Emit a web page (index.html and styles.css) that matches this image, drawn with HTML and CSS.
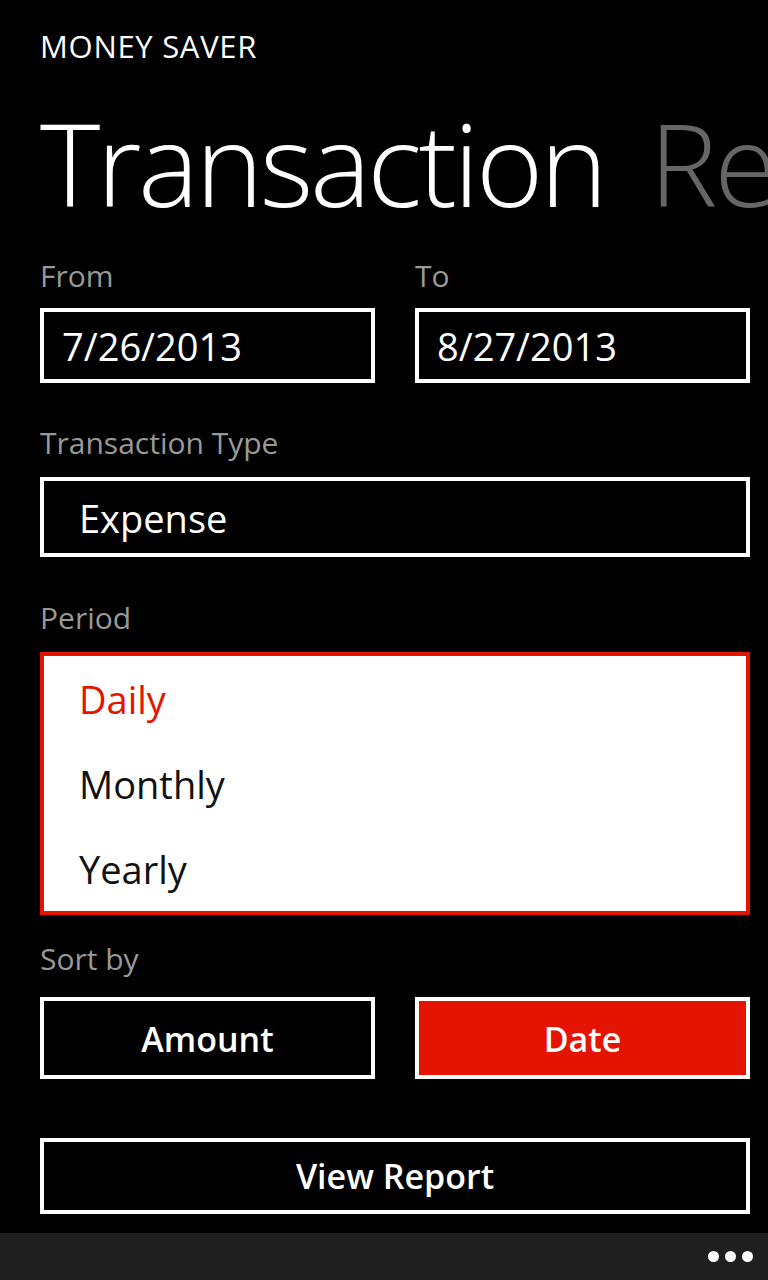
FILE: index.html
```html
<!DOCTYPE html>
<html lang="en">
<head>
<meta charset="utf-8">
<title>Money Saver</title>
<link rel="stylesheet" href="styles.css">
</head>
<body>
<div class="page">
  <main class="main">
    <div class="app-title">MONEY SAVER</div>
    <h1 class="pivot"><span class="pivot-active">Transaction</span><span class="pivot-next">Report</span></h1>

    <div class="row two-col">
      <div class="field">
        <div class="label label-from">From</div>
        <div class="box date-box">7/26/2013</div>
      </div>
      <div class="field">
        <div class="label label-from">To</div>
        <div class="box date-box">8/27/2013</div>
      </div>
    </div>

    <div class="label label-type">Transaction Type</div>
    <div class="box type-box">Expense</div>

    <div class="label label-period">Period</div>
    <ul class="period-list">
      <li class="period-item selected">Daily</li>
      <li class="period-item">Monthly</li>
      <li class="period-item">Yearly</li>
    </ul>

    <div class="label label-sort">Sort by</div>
    <div class="two-col">
      <div class="btn">Amount</div>
      <div class="btn btn-active">Date</div>
    </div>

    <div class="btn btn-report">View Report</div>
  </main>
  <footer class="appbar">
    <span class="dot"></span><span class="dot"></span><span class="dot"></span>
  </footer>
</div>
</body>
</html>
```

FILE: styles.css
```css
html, body {
  margin: 0;
  padding: 0;
  background: #000;
}
body {
  font-family: "Open Sans", "Noto Sans", sans-serif;
  color: #fff;
  overflow: hidden;
}
.page {
  width: 768px;
  height: 1280px;
  display: flex;
  flex-direction: column;
  overflow: hidden;
}
.main {
  flex: 1;
  padding-left: 40px;
  width: 710px;
}
.app-title {
  font-size: 31px;
  line-height: 31px;
  letter-spacing: 0.7px;
  margin-top: 31px;
  white-space: nowrap;
}
.pivot {
  margin: 43px 0 0 0;
  font-size: 115px;
  line-height: 115px;
  font-weight: 300;
  white-space: nowrap;
  width: 728px;
  overflow: hidden;
  letter-spacing: -3.5px;
}
.pivot-next {
  color: #666;
  margin-left: 45px;
}
.label {
  font-size: 30px;
  line-height: 30px;
  color: #999;
}
.two-col {
  display: grid;
  grid-template-columns: 335px 335px;
  column-gap: 40px;
}
.row {
  margin-top: 41px;
}
.label-from {
  margin-bottom: 17px;
}
.box {
  border: 4px solid #fff;
  font-size: 38px;
  line-height: 38px;
}
.date-box {
  padding: 15px 0 14px 18px;
}
.label-type {
  margin-top: 45px;
  margin-bottom: 19px;
}
.type-box {
  padding: 18px 0 16px 35px;
}
.label-period {
  margin-top: 46px;
  margin-bottom: 19px;
}
.period-list {
  list-style: none;
  margin: 0;
  padding: 0;
  background: #fff;
  border: 4px solid #e51400;
}
.period-item {
  font-size: 38px;
  line-height: 38px;
  padding: 24px 0 23px 35px;
  color: #111;
}
.period-item.selected {
  color: #e51400;
}
.label-sort {
  margin-top: 29px;
  margin-bottom: 23px;
}
.btn {
  border: 4px solid #fff;
  font-size: 34px;
  line-height: 34px;
  font-weight: 600;
  text-align: center;
  padding: 21px 0 19px 0;
}
.btn-active {
  background: #e51400;
}
.btn-report {
  margin-top: 59px;
  padding: 17px 0 17px 0;
}
.appbar {
  height: 47px;
  background: #1f1f1f;
  display: flex;
  justify-content: flex-end;
  align-items: center;
  gap: 6px;
  padding-right: 15px;
}
.dot {
  width: 11px;
  height: 11px;
  border-radius: 50%;
  background: #fff;
}
```
